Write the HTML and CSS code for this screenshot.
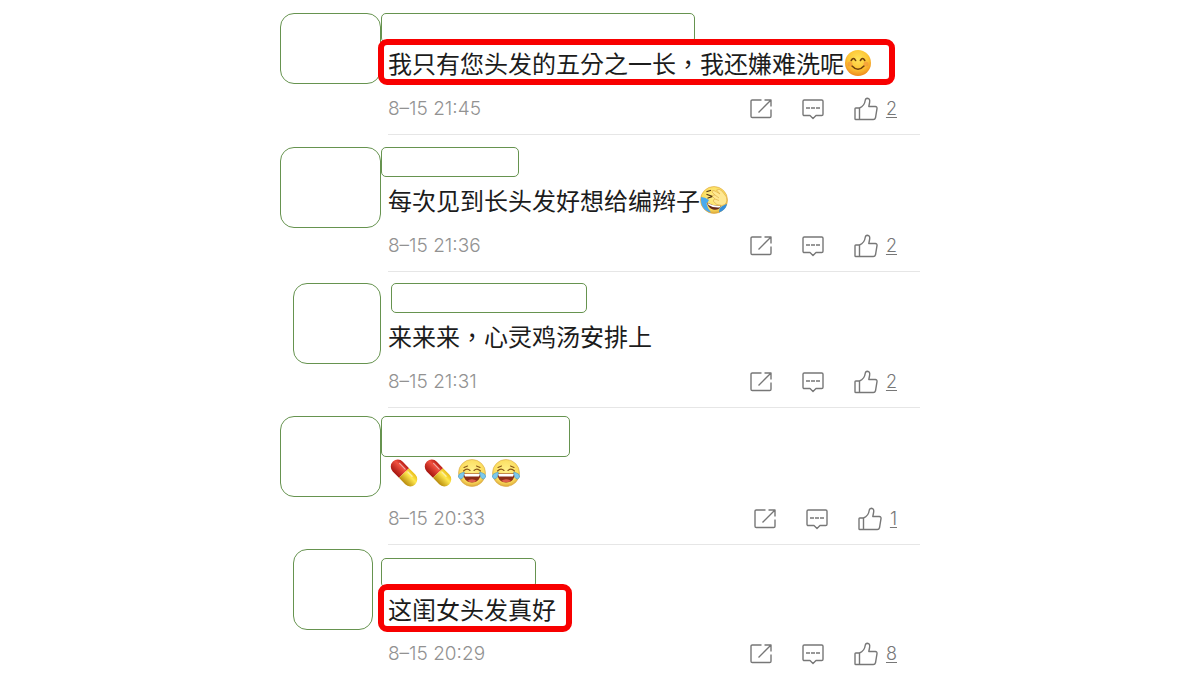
FILE: index.html
```html
<!DOCTYPE html>
<html lang="zh-TW">
<head>
<meta charset="utf-8">
<meta name="viewport" content="width=device-width, initial-scale=1">
<title>评论</title>
<link rel="stylesheet" href="styles.css">
</head>
<body>
<svg class="defs" aria-hidden="true">
  <defs>
    <radialGradient id="g-warm" cx="50%" cy="35%" r="65%"><stop offset="0" stop-color="#ffe45a"/><stop offset=".6" stop-color="#fdc535"/><stop offset="1" stop-color="#ee8a1c"/></radialGradient>
    <radialGradient id="g-pale" cx="50%" cy="40%" r="60%"><stop offset="0" stop-color="#fff08a"/><stop offset=".75" stop-color="#fbdc5c"/><stop offset="1" stop-color="#dda83a"/></radialGradient>
    <linearGradient id="g-red" x1="0" x2="0" y1="0" y2="1"><stop offset="0" stop-color="#b81d14"/><stop offset=".35" stop-color="#f0503f"/><stop offset="1" stop-color="#a5150f"/></linearGradient>
    <linearGradient id="g-yellow" x1="0" x2="0" y1="0" y2="1"><stop offset="0" stop-color="#e9bd18"/><stop offset=".35" stop-color="#ffe94f"/><stop offset="1" stop-color="#b88a0c"/></linearGradient>
    <symbol id="share" viewBox="0 0 22 22"><path d="M11.500 2H2.300Q1 2 1 3.300V18.200Q1 19.500 2.300 19.500H19.700Q21 19.500 21 18.200V11.500M14.500 2H21V8.500M20.500 2.500L8.500 14.500"/></symbol>
    <symbol id="reply" viewBox="0 0 22 22"><path d="M2.300 2H19.700Q21 2 21 3.300V16.200Q21 17.500 19.700 17.500H14L11 20.500L8 17.500H2.300Q1 17.500 1 16.200V3.300Q1 2 2.300 2Z"/><path d="M4 10H8M9 10H13M14 10H18"/></symbol>
    <symbol id="like" viewBox="0 0 24 24"><path d="M1.800 11H5.500V22.500H1.800Q1 22.500 1 21.700V11.800Q1 11 1.800 11ZM5.500 11Q10.500 9 11.200 3.500Q11.500 1.200 13.300 1.200Q16.300 1.500 15.600 5.500L14.800 9.500H21.300Q23.300 9.700 23 11.600L21.500 20.800Q21 22.500 19.300 22.500H5.500"/></symbol>
    <symbol id="smile" viewBox="0 0 28 28"><circle cx="14" cy="14" r="13" fill="url(#g-warm)"/><g fill="none" stroke="#70400d" stroke-width="1.600" stroke-linecap="round"><path d="M7.200 11.500Q9.500 7.500 11.600 11.500M16.400 11.500Q18.600 7.500 20.800 11.500M8 17Q14 23.500 20 17"/></g><g fill="#ef7f3d" opacity=".45"><circle cx="6" cy="15" r="2.500"/><circle cx="22" cy="15" r="2.500"/></g></symbol>
    <symbol id="joy" viewBox="0 0 28 28"><circle cx="14" cy="14" r="13.500" fill="url(#g-pale)" stroke="#d8a946" stroke-width=".6"/><path d="M5 14.500H23Q22 23.500 14 23.500T5 14.500Z" fill="#8b2d16"/><path d="M6 15H22L21 17.500H7Z" fill="#fff"/><path d="M9 22Q14 18.500 19 22Q14 24.500 9 22Z" fill="#df604b"/><path d="M5.500 12Q9 8.500 12 11.500M16 11.500Q19 8.500 22.500 12M6 8.500L9.500 7M18.500 7L22 8.500" fill="none" stroke="#885619" stroke-width="1.100" stroke-linecap="round"/><path d="M6.300 13Q6 20 2.500 20Q-1 18.500 1 15.500Q2.500 14 6.300 13ZM21.700 13Q22 20 25.500 20Q29 18.500 27 15.500Q25.500 14 21.700 13Z" fill="#7cc8ec" stroke="#398fc4" stroke-width=".5"/></symbol>
    <symbol id="facepalm" viewBox="0 0 28 28"><circle cx="14" cy="14" r="13.500" fill="url(#g-pale)" stroke="#dba43d" stroke-width=".6"/><path d="M1 11Q5 11 9 14Q8 16 6.500 17.500Q7.500 22.500 11 26.500Q0 24 1 11Z" fill="#4aa9ed"/><path d="M7 16.500Q14 20.500 21 19.500Q19 25 13 23.500Q8 22 7 16.500Z" fill="#65281a"/><path d="M7.500 17Q14 20.500 20.500 20L19.500 21.500Q13 22 8.500 19Z" fill="#fff"/><path d="M27 18Q23 18.500 19.500 22.500L19 26.500Q26 24 27 18Z" fill="#368fda"/><path d="M7 8.500L12.500 10.500L8 12M7 5.500L10.500 4.500" fill="none" stroke="#533414" stroke-width="1.300" stroke-linecap="round"/><path d="M12 6Q12 3.500 15 5L20 8L16.500 4Q19 2 22 5L26.500 11Q28 18.500 22 19.500Q16 19.500 13.500 15.500Q12.500 13.500 15 13L12.500 10.500Q12 8.500 15 9L12 6Z" fill="#ffe892" stroke="#dfb04c" stroke-width=".7"/><path d="M15 9L19 12M15 13L19 14.500" stroke="#dfb04c" stroke-width=".7"/></symbol>
    <symbol id="pill" viewBox="0 0 28 28"><g transform="rotate(46 14 14)"><path d="M14 7H5A7 7 0 0 0 5 21H14Z" fill="url(#g-red)"/><path d="M14 7H23A7 7 0 0 1 23 21H14Z" fill="url(#g-yellow)"/><path d="M4 10.500H12M16 10.500H22" stroke="#fff" stroke-width="1.300" stroke-linecap="round" opacity=".55"/></g></symbol>
  </defs>
</svg>
<main class="thread">
  <article class="comment comment--first">
    <div class="avatar avatar--short"></div>
    <div class="body">
      <header class="header"><div class="name name--long"></div></header>
      <div class="message"><p class="text text--marked">我只有您头发的五分之一长，我还嫌难洗呢<svg class="emoji" role="img" aria-label="微笑"><use href="#smile"/></svg></p></div>
      <footer class="meta"><time>8–15 21:45</time><div class="actions"><button aria-label="转发"><svg class="icon"><use href="#share"/></svg></button><button aria-label="回复"><svg class="icon"><use href="#reply"/></svg></button><button aria-label="赞 2"><svg class="icon icon--like"><use href="#like"/></svg><span class="count">2</span></button></div></footer>
    </div>
  </article>
  <article class="comment comment--second">
    <div class="avatar"></div>
    <div class="body">
      <header class="header"><div class="name name--short"></div></header>
      <div class="message"><p class="text">每次见到长头发好想给编辫子<svg class="emoji" role="img" aria-label="捂脸笑"><use href="#facepalm"/></svg></p></div>
      <footer class="meta"><time>8–15 21:36</time><div class="actions"><button aria-label="转发"><svg class="icon"><use href="#share"/></svg></button><button aria-label="回复"><svg class="icon"><use href="#reply"/></svg></button><button aria-label="赞 2"><svg class="icon icon--like"><use href="#like"/></svg><span class="count">2</span></button></div></footer>
    </div>
  </article>
  <article class="comment comment--third">
    <div class="avatar avatar--medium"></div>
    <div class="body">
      <header class="header"><div class="name name--inset"></div></header>
      <div class="message"><p class="text">来来来，心灵鸡汤安排上</p></div>
      <footer class="meta"><time>8–15 21:31</time><div class="actions"><button aria-label="转发"><svg class="icon"><use href="#share"/></svg></button><button aria-label="回复"><svg class="icon"><use href="#reply"/></svg></button><button aria-label="赞 2"><svg class="icon icon--like"><use href="#like"/></svg><span class="count">2</span></button></div></footer>
    </div>
  </article>
  <article class="comment comment--fourth">
    <div class="avatar"></div>
    <div class="body">
      <header class="header"><div class="name name--tall"></div></header>
      <div class="message"><p class="text text--emoji"><svg class="emoji" role="img" aria-label="药丸"><use href="#pill"/></svg><svg class="emoji" role="img" aria-label="药丸"><use href="#pill"/></svg><svg class="emoji" role="img" aria-label="笑哭"><use href="#joy"/></svg><svg class="emoji" role="img" aria-label="笑哭"><use href="#joy"/></svg></p></div>
      <footer class="meta"><time>8–15 20:33</time><div class="actions"><button aria-label="转发"><svg class="icon"><use href="#share"/></svg></button><button aria-label="回复"><svg class="icon"><use href="#reply"/></svg></button><button aria-label="赞 1"><svg class="icon icon--like"><use href="#like"/></svg><span class="count">1</span></button></div></footer>
    </div>
  </article>
  <article class="comment comment--fifth">
    <div class="avatar avatar--narrow"></div>
    <div class="body">
      <header class="header"><div class="name name--low"></div></header>
      <div class="message"><p class="text text--marked text--roomy">这闺女头发真好</p></div>
      <footer class="meta"><time>8–15 20:29</time><div class="actions"><button aria-label="转发"><svg class="icon"><use href="#share"/></svg></button><button aria-label="回复"><svg class="icon"><use href="#reply"/></svg></button><button aria-label="赞 8"><svg class="icon icon--like"><use href="#like"/></svg><span class="count">8</span></button></div></footer>
    </div>
  </article>
</main>
</body>
</html>
```

FILE: styles.css
```css
* { box-sizing: border-box; }

body {
  margin: 0;
  background: #fff;
  color: #1c1c1c;
  font-family: Inter, "Noto Sans CJK TC", sans-serif;
}

.defs { position: absolute; width: 0; height: 0; }

.thread { max-width: 640px; margin: 0 auto; }

.comment {
  --header: 40px;
  --avatar-top: 12px;
  --name-top: 12px;
  display: grid;
  grid-template-columns: 101px minmax(0, 1fr);
  align-items: start;
}
.comment--first { --header: 39px; --avatar-top: 13px; --name-top: 13px; }
.comment--second { --header: 41px; }
.comment--third { --avatar-top: 11px; --name-top: 11px; }
.comment--fourth { --header: 41px; --avatar-top: 8px; --name-top: 8px; }
.comment--fifth { --header: 39px; --avatar-top: 4px; --name-top: 13px; }

.avatar {
  width: 101px;
  height: 81px;
  margin-top: var(--avatar-top);
  border: 1px solid #66934f;
  border-radius: 14px;
}
.avatar--short { height: 71px; }
.avatar--medium { width: 88px; margin-left: 13px; }
.avatar--narrow { width: 80px; margin-left: 13px; }

.header { height: var(--header); padding-top: var(--name-top); }

.name {
  height: 30px;
  max-width: 100%;
  border: 1px solid #66934f;
  border-radius: 5px;
}
.name--long { width: 314px; }
.name--short { width: 138px; }
.name--inset { width: 196px; margin-left: 10px; }
.name--tall { width: 189px; height: 41px; }
.name--low { width: 155px; }

.message { min-height: 48px; padding-left: 7px; }

.text {
  display: flex;
  align-items: center;
  width: fit-content;
  margin: 0;
  padding-top: 10px;
  font-family: "Noto Sans CJK TC", sans-serif;
  font-size: 24px;
  font-weight: 400;
  line-height: 28px;
}
.text--marked {
  position: relative;
  margin-left: -10px;
  padding: 4px 17px 2px 4px;
  border: 6px solid #f80000;
  border-radius: 9px;
  background: #fff;
}
.text--roomy { padding: 5px 10px 3px 4px; }
.text--emoji { gap: 6px; padding-left: 2px; }

.emoji { flex: none; width: 28px; height: 28px; }

.meta {
  display: flex;
  align-items: center;
  justify-content: space-between;
  height: 48px;
  margin-left: 7px;
  padding: 0 23px 4px 0;
  border-bottom: 1px solid #e6e6e6;
  color: #929292;
  font-size: 19px;
  font-weight: 300;
  line-height: 24px;
}
.comment--fifth .meta { border-bottom: 0; }

.actions { display: flex; align-items: center; gap: 30px; }

button {
  display: flex;
  align-items: center;
  gap: 8px;
  padding: 0;
  border: 0;
  background: none;
  color: #777;
  font: inherit;
  cursor: pointer;
}

.icon {
  width: 22px;
  height: 22px;
  fill: none;
  stroke: #777;
  stroke-width: 1.4;
  stroke-linejoin: round;
}
.icon--like { width: 24px; height: 24px; }

.count { font-size: 18px; text-decoration: underline; text-underline-offset: 2px; }
```
